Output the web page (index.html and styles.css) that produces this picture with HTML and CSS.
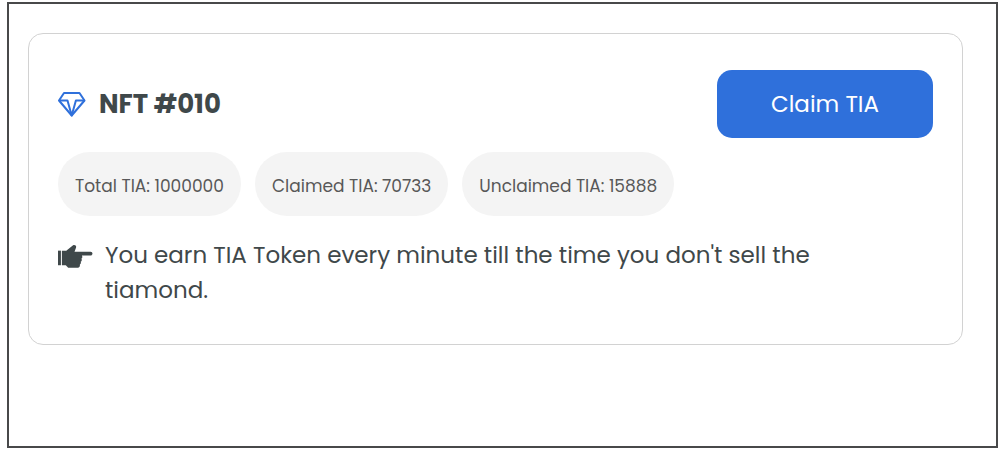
FILE: index.html
```html
<!DOCTYPE html>
<html lang="en">
<head>
    <meta charset="UTF-8">
    <meta name="viewport" content="width=device-width, initial-scale=1.0">
    <title>NFT #010</title>
    <link rel="stylesheet" href="styles.css">
</head>
<body>
    <main class="frame">
        <section class="card">
            <div class="card-header">
                <h2 class="card-title">
                    <svg class="diamond" viewBox="0 0 28 26" aria-hidden="true">
                        <path d="M6 2h15.500l5 7.500L13.700 24.500 1 9.500z"/>
                        <path d="M1 9.500h8.500l4.200 15 4.200-15h8.600"/>
                    </svg>
                    NFT #010
                </h2>
                <button class="claim-btn" type="button">Claim TIA</button>
            </div>

            <div class="stats">
                <span class="stat">Total TIA: 1000000</span>
                <span class="stat">Claimed TIA: 70733</span>
                <span class="stat">Unclaimed TIA: 15888</span>
            </div>

            <div class="note">
                <svg class="hand" viewBox="0 0 36 24" aria-hidden="true">
                    <path d="M0 6.500h3v15H0z"/>
                    <path d="M4 6.500h4.500L15.500 1c1.800-1 3.800.5 3 2.400L17 7.500H33.500c2.600 0 2.600 4 0 4H24.500c.9 1 .6 2.600-.4 3.200.7 1.200.4 2.700-.8 3.200.6 1.200.2 2.400-.8 2.800.3 2-.6 3.300-2 3.300H10.500L8 21.500H4z"/>
                </svg>
                <p class="note-text">You earn TIA Token every minute till the time you don't sell the tiamond.</p>
            </div>
        </section>
    </main>
</body>
</html>
```

FILE: styles.css
```css
* {
    box-sizing: border-box;
}
body {
    margin: 0;
    padding: 2px 6px 8px 7px;
    font-family: Poppins, Inter, sans-serif;
    background: #fff;
    color: #3f484a;
}
.frame {
    min-height: calc(100vh - 10px);
    padding: 29px 33px 29px 19px;
    border: 2px solid #48494a;
}
.card {
    padding: 36px 29px;
    border: 1px solid #d2d2d2;
    border-radius: 15px;
}
.card-header {
    display: flex;
    justify-content: space-between;
    align-items: center;
}
.card-title {
    display: flex;
    align-items: center;
    gap: 13px;
    margin: 0;
    font-size: 26px;
    font-weight: 700;
    line-height: 36px;
}
.diamond {
    width: 28px;
    height: 26px;
    fill: none;
    stroke: #2f70db;
    stroke-width: 2;
    stroke-linejoin: round;
}
.claim-btn {
    padding: 16px 54px;
    border: none;
    border-radius: 15px;
    background: #2f70db;
    color: #fff;
    font-family: inherit;
    font-size: 23px;
    line-height: 36px;
    cursor: pointer;
}
.stats {
    display: flex;
    flex-wrap: wrap;
    gap: 14px;
    margin-top: 14px;
}
.stat {
    padding: 22px 17px 18px;
    border-radius: 32px;
    background: #f4f4f4;
    color: #585858;
    font-size: 17px;
    line-height: 24px;
}
.note {
    display: flex;
    gap: 12px;
    margin-top: 22px;
}
.hand {
    flex-shrink: 0;
    width: 35px;
    height: 24px;
    margin-top: 6px;
    fill: #3f484a;
}
.note-text {
    margin: 0;
    padding-right: 60px;
    font-size: 23px;
    line-height: 35px;
}
```
